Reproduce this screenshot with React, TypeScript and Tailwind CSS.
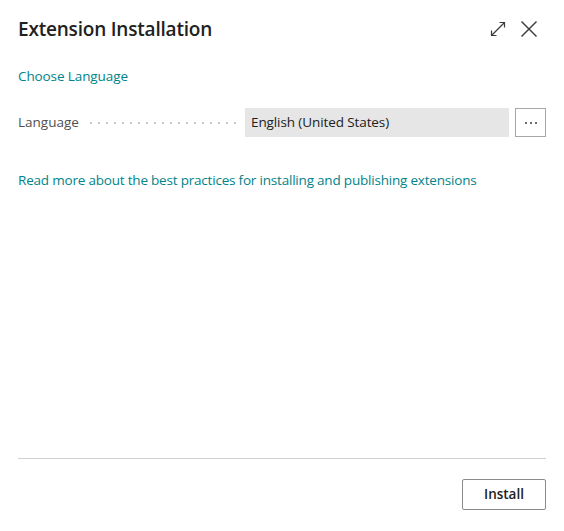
import React from 'react';

const ExpandIcon = () => (
  <svg width="16" height="16" viewBox="0 0 16 16" fill="none" stroke="#3b3b3b" strokeWidth="1.2">
    <path d="M1.5 14.5 L14.5 1.5" />
    <path d="M9.5 1.5 H14.5 V6.5" />
    <path d="M1.5 9.5 V14.5 H6.5" />
  </svg>
);

const CloseIcon = () => (
  <svg width="18" height="18" viewBox="0 0 18 18" fill="none" stroke="#3b3b3b" strokeWidth="1.4">
    <path d="M1.5 1.5 L16.5 16.5" />
    <path d="M16.5 1.5 L1.5 16.5" />
  </svg>
);

export default function App() {
  return (
    <div
      className="w-[564px] h-[531px] bg-white flex flex-col text-[#212121]"
      style={{ fontFamily: '"Open Sans", "Noto Sans", sans-serif' }}
    >
      {/* Header */}
      <div className="flex items-center justify-between pl-[18px] pr-[26px] pt-[14px] h-[44px]">
        <h1 className="text-[19px] font-semibold tracking-[-0.2px]">Extension Installation</h1>
        <div className="flex items-center gap-[14px]">
          <button className="w-[16px] h-[16px] flex items-center justify-center">
            <ExpandIcon />
          </button>
          <button className="w-[18px] h-[18px] flex items-center justify-center">
            <CloseIcon />
          </button>
        </div>
      </div>

      {/* Body */}
      <div className="flex-1 flex flex-col px-[18px]">
        <a className="mt-[22px] text-[13.5px] text-[#00838a] cursor-pointer leading-[20px] tracking-[-0.1px]">Choose Language</a>

        <div className="mt-[22px] flex items-center h-[29px]">
          <span className="text-[13.5px] text-[#505050] shrink-0">Language</span>
          <div className="flex-1 mx-[8px] h-[2px] self-center bg-[radial-gradient(circle,#c8c8c8_1px,transparent_1.2px)] bg-[length:8px_2px]" />
          <div className="w-[264px] h-[29px] bg-[#e6e6e6] flex items-center px-[6px] text-[13.5px] text-[#212121] tracking-[-0.1px]">
            English (United States)
          </div>
          <button className="ml-[6px] w-[31px] h-[29px] border border-[#a6a6a6] bg-white flex items-center justify-center gap-[3px]">
            <span className="w-[2px] h-[2px] bg-[#3b3b3b] rounded-full" />
            <span className="w-[2px] h-[2px] bg-[#3b3b3b] rounded-full" />
            <span className="w-[2px] h-[2px] bg-[#3b3b3b] rounded-full" />
          </button>
        </div>

        <p className="mt-[33px] text-[13.5px] text-[#00838a] leading-[20px] tracking-[-0.2px]">
          Read more about the best practices for installing and publishing extensions
        </p>

        <div className="flex-1" />

        <div className="border-t border-[#d0d0d0] mb-[1px]" />

        <div className="flex justify-end pt-[19px] pb-[21px]">
          <button className="w-[84px] h-[31px] border border-[#8a8a8a] rounded-[2px] text-[13.5px] font-semibold text-[#212121] bg-white">
            Install
          </button>
        </div>
      </div>
    </div>
  );
}
